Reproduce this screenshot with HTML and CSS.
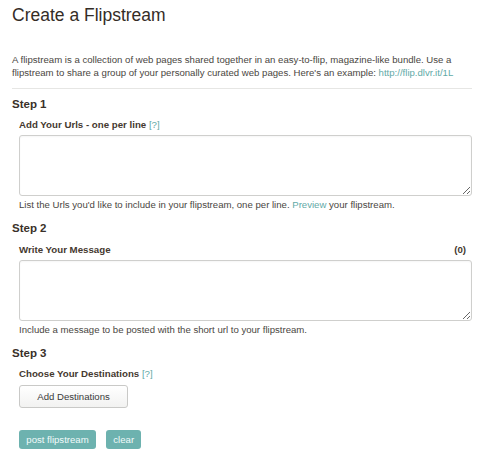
FILE: index.html
```html
<!DOCTYPE html>
<html>
<head>
<meta charset="utf-8">
<title>Create a Flipstream</title>
<link rel="stylesheet" href="styles.css">
</head>
<body>
<div class="page">
  <h1 class="title">Create a Flipstream</h1>
  <p class="intro">A flipstream is a collection of web pages shared together in an easy-to-flip, magazine-like bundle. Use a flipstream to share a group of your personally curated web pages. Here's an example: <a class="link" href="#">http://flip.dlvr.it/1L</a></p>
  <hr class="divider">

  <section class="step">
    <h2 class="step-title">Step 1</h2>
    <div class="field">
      <div class="label-row"><span class="label">Add Your Urls - one per line <a class="link help" href="#">[?]</a></span></div>
      <textarea class="box"></textarea>
      <div class="hint">List the Urls you'd like to include in your flipstream, one per line. <a class="link" href="#">Preview</a> your flipstream.</div>
    </div>
  </section>

  <section class="step">
    <h2 class="step-title">Step 2</h2>
    <div class="field">
      <div class="label-row"><span class="label">Write Your Message</span><span class="label count">(0)</span></div>
      <textarea class="box"></textarea>
      <div class="hint">Include a message to be posted with the short url to your flipstream.</div>
    </div>
  </section>

  <section class="step">
    <h2 class="step-title">Step 3</h2>
    <div class="field">
      <div class="label-row"><span class="label">Choose Your Destinations <a class="link help" href="#">[?]</a></span></div>
      <button class="btn-plain" type="button">Add Destinations</button>
      <div class="actions">
        <button class="btn-teal" type="button">post flipstream</button>
        <button class="btn-teal" type="button">clear</button>
      </div>
    </div>
  </section>
</div>
</body>
</html>
```

FILE: styles.css
```css
html, body {
  margin: 0;
  padding: 0;
  background: #ffffff;
}
body {
  font-family: "Liberation Sans", Arial, sans-serif;
  color: #454340;
}
.page {
  padding: 5px 10px 0 12px;
}
.title {
  margin: 0;
  font-size: 17.5px;
  line-height: 20px;
  font-weight: normal;
  color: #342c26;
}
.intro {
  margin: 28px 0 0 0;
  font-size: 9.6px;
  line-height: 13px;
  color: #4a4642;
}
.link {
  color: #62aaa7;
  text-decoration: none;
}
.divider {
  margin: 9px 0 0 0;
  border: 0;
  height: 1px;
  background: #e6e6e4;
}
.step {
  margin-top: 10px;
}
.step:first-of-type {
  margin-top: 7.5px;
}
.step-title {
  margin: 0;
  font-size: 11.5px;
  line-height: 14px;
  font-weight: bold;
  color: #3a3029;
}
.field {
  padding-left: 7px;
  display: flex;
  flex-direction: column;
  align-items: flex-start;
}
.label-row {
  margin-top: 8.5px;
  width: 100%;
  display: flex;
  justify-content: space-between;
  box-sizing: border-box;
  padding-right: 6px;
}
.label {
  font-size: 9.7px;
  line-height: 12px;
  font-weight: bold;
  color: #45392f;
}
.help {
  font-weight: normal;
}
.box {
  margin: 4px 0 0 0;
  width: 100%;
  height: 61px;
  box-sizing: border-box;
  border: 1px solid #cfcfcd;
  border-radius: 3px;
  background: #ffffff;
  box-shadow: inset 0 1px 2px rgba(0,0,0,0.04);
  display: block;
}
.hint {
  margin-top: 3px;
  font-size: 9.6px;
  line-height: 12px;
  color: #4a4642;
}
.btn-plain {
  margin-top: 5px;
  width: 109px;
  height: 23px;
  box-sizing: border-box;
  border: 1px solid #c9c9c7;
  border-radius: 3px;
  background: linear-gradient(#ffffff, #f2f2f1);
  font-family: "Liberation Sans", Arial, sans-serif;
  font-size: 9.6px;
  color: #3a3a3a;
  padding: 0;
}
.actions {
  margin-top: 22px;
  display: flex;
  gap: 10px;
}
.btn-teal {
  height: 19px;
  box-sizing: border-box;
  border: 0;
  border-radius: 3px;
  background: #6db2af;
  color: #f2fafa;
  font-family: "Liberation Sans", Arial, sans-serif;
  font-size: 9.6px;
  padding: 0 7.3px;
}
```
